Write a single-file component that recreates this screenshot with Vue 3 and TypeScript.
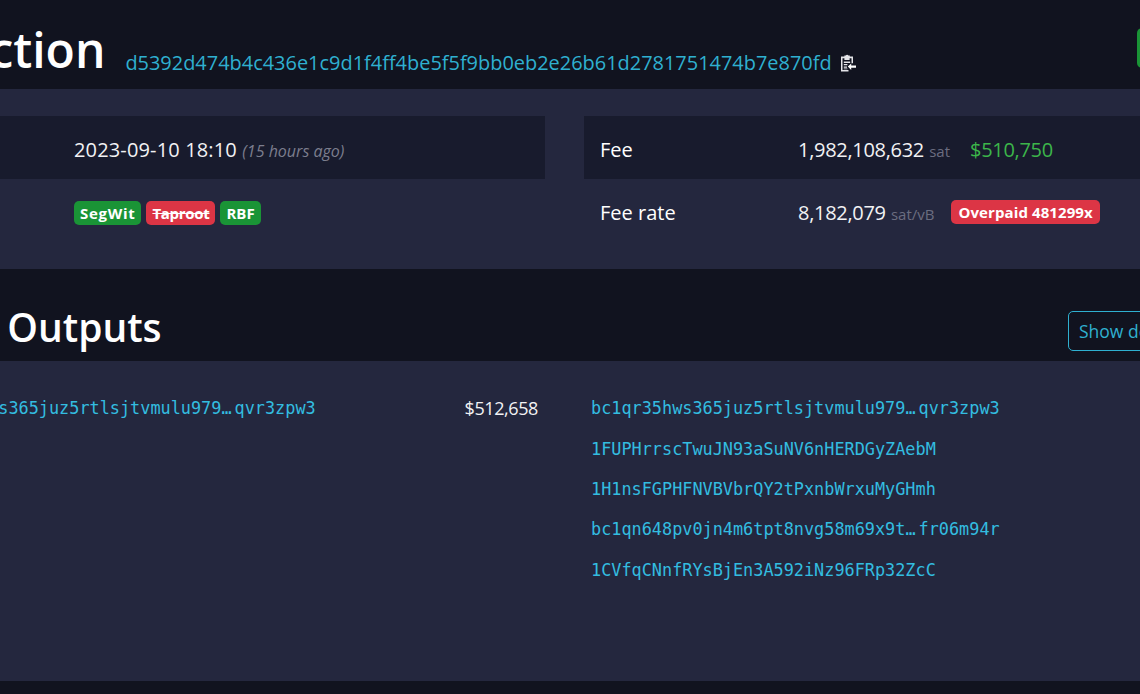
<script setup lang="ts">
interface Output {
  address: string;
  tail?: string;
  value: string;
}

const outputs: Output[] = [
  { address: 'bc1qr35hws365juz5rtlsjtvmulu979', tail: 'qvr3zpw3', value: '$512,658' },
  { address: '1FUPHrrscTwuJN93aSuNV6nHERDGyZAebM', value: '$1,244' },
  { address: '1H1nsFGPHFNVBVbrQY2tPxnbWrxuMyGHmh', value: '$306' },
  { address: 'bc1qn648pv0jn4m6tpt8nvg58m69x9t', tail: 'fr06m94r', value: '$212' },
  { address: '1CVfqCNnfRYsBjEn3A592iNz96FRp32ZcC', value: '$146' },
];
</script>

<template>
  <div class="viewport">
    <div class="page">
      <header class="head">
        <h1 class="title">Transaction</h1>
        <a class="hash">d5392d474b4c436e1c9d1f4ff4be5f5f9bb0eb2e26b61d2781751474b7e870fd</a>
        <svg class="copy" viewBox="0 0 16 18" width="16" height="18" aria-hidden="true">
          <path d="M1 2.6h3.4V1.6h1.4a1.5 1.5 0 0 1 2.6 0h1.4v1H13v6.6h-1.5V4.2h-1.9V6H4.4V4.2H2.5v11.9h6V17.6H1z" fill="#e4e4e8" />
          <path d="M3.8 7.6h6.4v1.3H3.8zM3.8 10h3.6v1.3H3.8zM3.8 12.4h3.2v1.3H3.8zM3.8 14.4h3.6v.9H3.8z" fill="#e4e4e8" />
          <path d="M7.8 12.6 11.2 9.4v2.1H16v2.3h-4.8v2.1z" fill="#fff" />
        </svg>
        <span class="status">Confirmed</span>
      </header>

      <section class="box details">
        <div class="col">
          <div class="row dark">
            <span class="label">Timestamp</span>
            <span class="value date">2023-09-10 18:10 <i class="ago">(15 hours ago)</i></span>
          </div>
          <div class="row">
            <span class="label">Features</span>
            <span class="tags">
              <b class="tag green wide">SegWit</b>
              <b class="tag red narrow"><s>Taproot</s></b>
              <b class="tag green">RBF</b>
            </span>
          </div>
        </div>
        <div class="col">
          <div class="row dark">
            <span class="label">Fee</span>
            <span class="value"><span class="num">1,982,108,632</span> <small class="unit">sat</small><em class="fiat">$510,750</em></span>
          </div>
          <div class="row">
            <span class="label">Fee rate</span>
            <span class="value"><span class="num">8,182,079</span> <small class="unit">sat/vB</small><b class="tag red over">Overpaid 481299x</b></span>
          </div>
        </div>
      </section>

      <div class="subhead">
        <h2 class="subtitle">Inputs &amp; Outputs</h2>
        <button class="toggle">Show details</button>
      </div>

      <section class="box flows">
        <div class="col">
          <div class="flow">
            <span class="arrow"></span>
            <a class="addr">{{ outputs[0].address }}<span class="dots">…</span>{{ outputs[0].tail }}</a>
            <span class="amount">$512,658</span>
          </div>
        </div>
        <div class="col">
          <div v-for="o in outputs" :key="o.address" class="flow">
            <a class="addr">{{ o.address }}<template v-if="o.tail"><span class="dots">…</span>{{ o.tail }}</template></a>
            <span class="amount">{{ o.value }}</span>
          </div>
        </div>
      </section>
    </div>
  </div>
</template>

<style>
body {
  background: #11131f;
}
</style>

<style scoped>
.viewport {
  height: 694px;
  overflow: hidden;
  background: #11131f;
  color: #fff;
  font-family: "Open Sans", "Noto Sans", sans-serif;
  font-size: 20px;
}

.page {
  width: 1409px;
  margin-left: -140px;
}

.head {
  display: flex;
  align-items: baseline;
  height: 89px;
  box-sizing: border-box;
}

.title {
  margin: 0 0 0 -28px;
  padding-top: 18px;
  font-size: 48px;
  font-weight: 600;
  line-height: 64px;
}

.hash {
  align-self: flex-end;
  margin: 0 0 13px 20px;
  color: #2fb0d0;
  font-size: 19.95px;
  line-height: 27px;
}

.copy {
  align-self: flex-end;
  margin: 0 0 17px 8px;
}

.status {
  align-self: flex-start;
  margin: 28px 0 0 auto;
  width: 132px;
  height: 40px;
  border-radius: 5px;
  background: #1a9436;
  line-height: 40px;
  text-align: center;
}

.box {
  display: grid;
  grid-template-columns: 685px 685px;
  column-gap: 39px;
  background: #24273e;
}

.details {
  padding: 27px 0;
}

.row {
  display: flex;
  align-items: center;
  height: 63px;
  box-sizing: border-box;
  padding: 4px 0 0 16px;
}

.dark {
  background: #181b2d;
}

.label {
  flex: 0 0 198px;
}

.value {
  color: #f2f2f4;
}

.date {
  letter-spacing: 0.15px;
}

.num {
  letter-spacing: -0.3px;
}

.ago {
  color: #7c7e8e;
  font-size: 16px;
  letter-spacing: 0;
}

.unit {
  color: #6b6d80;
  font-size: 15px;
}

.fiat {
  margin-left: 20px;
  color: #3cb54a;
  font-style: normal;
  letter-spacing: -0.3px;
}

.tags {
  display: flex;
  gap: 5px;
}

.tag {
  display: inline-block;
  height: 24px;
  padding: 0 6px;
  border-radius: 5px;
  color: #fff;
  font-size: 15px;
  line-height: 24px;
}

.wide {
  letter-spacing: 0.7px;
}

.narrow {
  letter-spacing: -0.3px;
}

.green {
  background: #1a9436;
}

.red {
  background: #dc3545;
}

.over {
  margin-left: 17px;
  padding: 0 7px;
  letter-spacing: 0.1px;
  vertical-align: 2px;
}

.subhead {
  display: flex;
  align-items: flex-end;
  justify-content: space-between;
  height: 92px;
  box-sizing: border-box;
  padding-bottom: 10px;
}

.subtitle {
  margin: 0 0 -2px -22px;
  font-size: 39px;
  font-weight: 600;
  line-height: 52px;
}

.toggle {
  width: 136px;
  height: 40px;
  margin-right: 65px;
  padding: 0 10px;
  border: 1px solid #2fb0d0;
  border-radius: 5px;
  background: #11131f;
  color: #2fb0d0;
  font: inherit;
  font-size: 17.5px;
  text-align: left;
}

.flows {
  padding: 27px 0 91px;
}

.flow {
  display: flex;
  align-items: center;
  height: 40.4px;
  padding: 0 7px;
}

.arrow {
  flex: 0 0 40px;
}

.addr {
  color: #33bde0;
  font-family: "DejaVu Sans Mono", "Liberation Mono", monospace;
  font-size: 16.85px;
  white-space: nowrap;
}

.dots {
  margin-right: 3px;
}

.amount {
  margin-left: auto;
  color: #f2f2f4;
  font-size: 18px;
  letter-spacing: -0.4px;
}
</style>
